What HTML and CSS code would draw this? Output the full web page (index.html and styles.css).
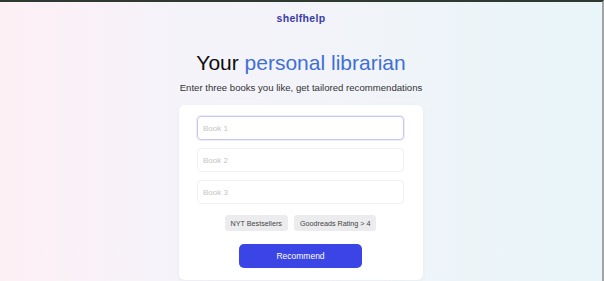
FILE: index.html
```html
<!DOCTYPE html>
<html lang="en">
<head>
    <meta charset="UTF-8">
    <meta name="viewport" content="width=device-width, initial-scale=1.0">
    <title>shelfhelp - Your personal librarian</title>
    <link rel="stylesheet" href="styles.css">
</head>
<body>
    <header class="topbar">
        <span class="logo">shelfhelp</span>
    </header>

    <main class="hero">
        <h1>Your <span class="accent">personal librarian</span></h1>
        <p class="subtitle">Enter three books you like, get tailored recommendations</p>

        <form class="card" onsubmit="return false;">
            <input type="text" class="book-input" placeholder="Book 1" autofocus>
            <input type="text" class="book-input" placeholder="Book 2">
            <input type="text" class="book-input" placeholder="Book 3">

            <div class="filters">
                <button type="button" class="tag">NYT Bestsellers</button>
                <button type="button" class="tag">Goodreads Rating &gt; 4</button>
            </div>

            <button type="submit" class="recommend">Recommend</button>
        </form>
    </main>
</body>
</html>
```

FILE: styles.css
```css
:root {
    --primary: #3b45e6;
    --accent: #3f6fd6;
    --ink: #0d0d0d;
}
html, body {
    height: 100%;
}
body {
    margin: 0;
    font-family: 'Liberation Sans', Arial, sans-serif;
    color: var(--ink);
    background: linear-gradient(90deg, #fdf0f5 0%, #f5f3fa 30%, #f1f4f9 60%, #e8f5f9 100%);
    border-top: 2px solid #2e3a30;
    border-right: 2px solid #a3a3a3;
    box-sizing: border-box;
    overflow: hidden;
}
.topbar {
    text-align: center;
    padding: 8px 0 12px;
    line-height: 14px;
}
.logo {
    font-size: 10.5px;
    font-weight: bold;
    color: #3a3ca8;
    letter-spacing: 0.3px;
}
.hero {
    display: flex;
    flex-direction: column;
    align-items: center;
}
h1 {
    margin: 13px 0 0;
    font-size: 21px;
    line-height: 26px;
    font-weight: normal;
}
.accent {
    color: var(--accent);
}
.subtitle {
    margin: 5px 0 0;
    font-size: 9.6px;
    line-height: 14px;
    color: #333;
}
.card {
    margin-top: 10px;
    width: 244px;
    box-sizing: border-box;
    padding: 11px 19px 12px 18px;
    background: white;
    border-radius: 6px;
    box-shadow: 0 1px 4px rgba(0,0,0,0.04);
    display: flex;
    flex-direction: column;
    align-items: center;
}
.book-input {
    width: 100%;
    height: 24px;
    box-sizing: border-box;
    margin: 0 0 8px;
    padding: 0 5px;
    border: 1px solid #f1f1f4;
    border-radius: 4px;
    font-family: inherit;
    font-size: 8px;
    color: #333;
    background: white;
    outline: none;
}
.book-input:focus {
    border-color: #c9c9ef;
    box-shadow: 0 0 0 1px #ececfb;
}
.book-input::placeholder {
    color: #c4c4c4;
}
.filters {
    display: flex;
    gap: 6px;
    margin-top: 3px;
}
.tag {
    height: 16px;
    padding: 0 6px;
    border: none;
    border-radius: 3px;
    background: #ececee;
    color: #444;
    font-family: inherit;
    font-size: 7.2px;
    cursor: pointer;
}
.recommend {
    margin-top: 13px;
    width: 123px;
    height: 24px;
    border: none;
    border-radius: 5px;
    background: var(--primary);
    color: white;
    font-family: inherit;
    font-size: 8.5px;
    cursor: pointer;
}
.recommend:hover {
    background: #2f38c9;
}
```
